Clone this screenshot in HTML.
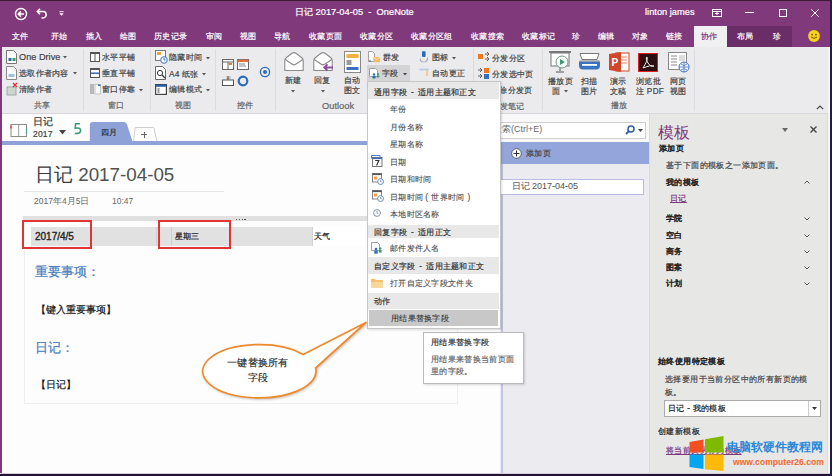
<!DOCTYPE html>
<html><head><meta charset="utf-8">
<style>
html,body{margin:0;padding:0;}
body{text-spacing-trim:space-all;width:832px;height:476px;position:relative;overflow:hidden;background:#fdfdfd;font-family:"Liberation Sans",sans-serif;color:#444;}
.a{position:absolute;}
.t{position:absolute;white-space:nowrap;line-height:1;-webkit-text-stroke-width:0.2px;}
.w{color:#fff;}
.tab{font-size:8.3px;letter-spacing:0.35px;top:32px;color:#fff;}
.rb{font-size:8.2px;letter-spacing:0.3px;color:#444;}
.gl{font-size:8.2px;letter-spacing:0.3px;color:#666;}
.mi{font-size:8.3px;letter-spacing:0.3px;color:#4a4a4a;-webkit-text-stroke-width:0.1px;}
.mh{font-size:8.3px;letter-spacing:0.25px;color:#333;}
.sep{position:absolute;width:1px;background:#dcdcdc;}
svg{position:absolute;overflow:visible;}
</style></head>
<body>
<!-- title bar + tabs -->
<div class="a" style="left:0;top:0;width:832px;height:47px;background:#80397b;"></div>
<div class="a" style="left:0;top:0;width:832px;height:1px;background:#3a1a38;"></div>
<!-- left & bottom borders -->
<div class="a" style="left:0;top:47px;width:1.5px;height:429px;background:#80397b;"></div>



<!-- quick access -->
<svg style="left:14px;top:6.5px" width="14" height="14" viewBox="0 0 14 14"><circle cx="7" cy="7" r="5.5" fill="none" stroke="#fff" stroke-width="1.4"/><path d="M10 7H4.4M7 4.3L4.3 7 7 9.7" fill="none" stroke="#fff" stroke-width="1.7"/></svg>
<svg style="left:35px;top:7px" width="14" height="12" viewBox="0 0 14 12"><path d="M2.5 4.5h5.5a3.2 3.2 0 0 1 0 6.4H6.5M5 1.8L2.3 4.5 5 7.2" fill="none" stroke="#fff" stroke-width="1.5"/></svg>
<svg style="left:58.5px;top:10.5px" width="5" height="5" viewBox="0 0 5 5"><path d="M0.5 0.6h4" stroke="#fff" stroke-width="0.9"/><path d="M0.3 2.2h4.4L2.5 4.8z" fill="#fff"/></svg>

<div class="t w" style="left:295px;top:8px;font-size:9.3px;">日记 2017-04-05 &nbsp;- &nbsp;OneNote</div>
<div class="t w" style="left:645px;top:8px;font-size:9.3px;">linton james</div>
<svg style="left:712px;top:9px" width="10" height="8" viewBox="0 0 10 8"><rect x="0.5" y="0.5" width="9" height="7" fill="none" stroke="#fff" stroke-width="1"/><path d="M0.5 2.5h9M3 4.5h4M5 2.5v3.5" stroke="#fff" stroke-width="1"/></svg>
<div class="a" style="left:745px;top:12px;width:9px;height:1px;background:#fff;"></div>
<div class="a" style="left:779px;top:9px;width:6px;height:6px;border:1px solid #fff;"></div>
<svg style="left:811px;top:9px" width="8" height="8" viewBox="0 0 8 8"><path d="M0.3 0.3l7.4 7.4M7.7 0.3l-7.4 7.4" stroke="#fff" stroke-width="1"/></svg>

<!-- tabs -->
<div class="t tab" style="left:12px;">文件</div>
<div class="t tab" style="left:51px;">开始</div>
<div class="t tab" style="left:86px;">插入</div>
<div class="t tab" style="left:120px;">绘图</div>
<div class="t tab" style="left:154px;">历史记录</div>
<div class="t tab" style="left:206px;">审阅</div>
<div class="t tab" style="left:240px;">视图</div>
<div class="t tab" style="left:274px;">导航</div>
<div class="t tab" style="left:309px;">收藏页面</div>
<div class="t tab" style="left:360px;">收藏分区</div>
<div class="t tab" style="left:411px;">收藏分区组</div>
<div class="t tab" style="left:471px;">收藏搜索</div>
<div class="t tab" style="left:522px;">收藏标记</div>
<div class="t tab" style="left:572px;">珍</div>
<div class="t tab" style="left:598px;">编辑</div>
<div class="t tab" style="left:632px;">对象</div>
<div class="t tab" style="left:666px;">链接</div>
<div class="a" style="left:694px;top:26px;width:33px;height:21px;background:#f0f0f2;"></div>
<div class="t tab" style="left:701px;color:#80397b;">协作</div>
<div class="a" style="left:727px;top:26px;width:65px;height:21px;background:#6b2d67;"></div>
<div class="t tab" style="left:737px;">布局</div>
<div class="t tab" style="left:773px;">珍</div>
<svg style="left:808px;top:30px" width="12" height="12" viewBox="0 0 12 12"><circle cx="6" cy="6" r="5.9" fill="#f7d21c"/><circle cx="4.1" cy="4.6" r="0.9" fill="#6b4a00"/><circle cx="7.9" cy="4.6" r="0.9" fill="#6b4a00"/><path d="M3 6.9q3 3 6 0" fill="none" stroke="#6b4a00" stroke-width="1"/></svg>

<!-- ribbon -->
<div class="a" style="left:1.5px;top:47px;width:827px;height:66px;background:#ebebee;"></div>
<div class="a" style="left:2px;top:113px;width:827px;height:1px;background:#d8d8dc;"></div>

<!-- group 共享 -->
<svg style="left:6px;top:50px" width="12" height="14" viewBox="0 0 12 14"><path d="M0.5 0.5h7l3 3v10h-10z" fill="#fff" stroke="#777"/><rect x="2.5" y="8" width="3" height="3" fill="#2b6cb8"/><rect x="6.5" y="8" width="3" height="3" fill="#3a9a5a"/></svg>
<div class="t rb" style="left:19px;top:53px;font-size:9.2px;letter-spacing:0;">One Drive</div>
<svg style="left:62.5px;top:56px" width="4" height="2.5" viewBox="0 0 4 2.5"><path d="M0 0h4L2 2.5z" fill="#555"/></svg>
<svg style="left:6px;top:66px" width="12" height="14" viewBox="0 0 12 14"><path d="M0.5 0.5h7l3 3v10h-10z" fill="#fafafa" stroke="#888"/><rect x="2.5" y="8" width="6" height="3" fill="#9cc3e0"/></svg>
<div class="t rb" style="left:19px;top:70px;">选取作者内容</div>
<svg style="left:72.5px;top:72px" width="4" height="2.5" viewBox="0 0 4 2.5"><path d="M0 0h4L2 2.5z" fill="#555"/></svg>
<svg style="left:6px;top:82px" width="12" height="14" viewBox="0 0 12 14"><rect x="1" y="5" width="9" height="8" fill="#cfd6cf" stroke="#9aa"/><path d="M7 1l4 4M11 1l-4 4" stroke="#e03030" stroke-width="1.3"/></svg>
<div class="t rb" style="left:19px;top:86px;">清除作者</div>
<div class="t gl" style="left:34px;top:102px;">共享</div>
<div class="sep" style="left:83px;top:49px;height:62px;"></div>

<!-- group 窗口 -->
<svg style="left:89.5px;top:52px" width="10" height="10" viewBox="0 0 10 10"><rect x="0.5" y="0.5" width="9" height="9" fill="#fff" stroke="#555" stroke-width="1"/><path d="M5 0.5v9" stroke="#555" stroke-width="1"/><rect x="0.5" y="0.5" width="9" height="1.5" fill="#555"/></svg>
<div class="t rb" style="left:102px;top:54px;">水平平铺</div>
<svg style="left:89.5px;top:68px" width="10" height="10" viewBox="0 0 10 10"><rect x="0.5" y="0.5" width="9" height="9" fill="#fff" stroke="#555" stroke-width="1"/><rect x="0.5" y="0.5" width="9" height="1.5" fill="#555"/><path d="M0.5 5.2h9" stroke="#2b5ea8" stroke-width="1.4"/></svg>
<div class="t rb" style="left:102px;top:70px;">垂直平铺</div>
<svg style="left:89.5px;top:84px" width="11" height="10" viewBox="0 0 11 10"><rect x="0" y="0" width="4" height="10" fill="#b8b8b8"/><rect x="5" y="0.5" width="5.5" height="9.5" fill="#fafafa" stroke="#bbb" stroke-width="0.8"/><rect x="8" y="0.5" width="2.5" height="1.5" fill="#3a70c0"/></svg>
<div class="t rb" style="left:102px;top:86px;">窗口停靠</div>
<svg style="left:139px;top:89px" width="4" height="2.5" viewBox="0 0 4 2.5"><path d="M0 0h4L2 2.5z" fill="#555"/></svg>
<div class="t gl" style="left:108px;top:102px;">窗口</div>
<div class="sep" style="left:150px;top:49px;height:62px;"></div>

<!-- group 视图 -->
<svg style="left:155px;top:50px" width="13" height="14" viewBox="0 0 13 14"><rect x="0.5" y="0.5" width="10" height="10" fill="#fff" stroke="#777"/><rect x="2" y="2" width="4" height="3" fill="#f0a040"/><circle cx="9" cy="10" r="3.3" fill="#fff" stroke="#3a6fb8"/><path d="M9 8v2h1.5" stroke="#3a6fb8" fill="none"/></svg>
<div class="t rb" style="left:169px;top:54px;">隐藏时间</div>
<svg style="left:205.5px;top:57px" width="4" height="2.5" viewBox="0 0 4 2.5"><path d="M0 0h4L2 2.5z" fill="#555"/></svg>
<svg style="left:155px;top:66px" width="13" height="14" viewBox="0 0 13 14"><path d="M0.5 0.5h7l3 3v10h-10z" fill="#fff" stroke="#666"/><circle cx="5" cy="7" r="2.6" fill="none" stroke="#333"/><path d="M7 9l3 3" stroke="#333" stroke-width="1.2"/></svg>
<div class="t rb" style="left:169px;top:70px;font-size:8.4px;letter-spacing:0.2px;">A4 纸张</div>
<svg style="left:202px;top:73px" width="4" height="2.5" viewBox="0 0 4 2.5"><path d="M0 0h4L2 2.5z" fill="#555"/></svg>
<svg style="left:155px;top:84px" width="12" height="11" viewBox="0 0 12 11"><rect x="0.6" y="0.6" width="10.8" height="9.8" fill="#fff" stroke="#444" stroke-width="1.2"/><rect x="0.6" y="0.6" width="10.8" height="2.2" fill="#2b5ea8"/><rect x="2.5" y="4" width="2" height="5" fill="#999"/></svg>
<div class="t rb" style="left:169px;top:86px;">编辑模式</div>
<svg style="left:205.5px;top:89px" width="4" height="2.5" viewBox="0 0 4 2.5"><path d="M0 0h4L2 2.5z" fill="#555"/></svg>
<div class="t gl" style="left:175px;top:102px;">视图</div>
<div class="sep" style="left:215px;top:49px;height:62px;"></div>

<!-- group 控件 -->
<svg style="left:222px;top:59px" width="12" height="11" viewBox="0 0 12 11"><rect x="0.5" y="0.5" width="11" height="10" fill="#fff" stroke="#666"/><path d="M0.5 3h11M6 3v7.5" stroke="#666"/><rect x="7" y="4" width="3" height="2" fill="#e08030"/></svg>
<svg style="left:237px;top:59px" width="12" height="11" viewBox="0 0 12 11"><rect x="0.5" y="0.5" width="11" height="10" fill="#fff" stroke="#666"/><rect x="0.5" y="0.5" width="11" height="2.5" fill="#e07040"/><path d="M2 5h6M2 7h7" stroke="#888"/></svg>
<svg style="left:222px;top:75px" width="12" height="11" viewBox="0 0 12 11"><rect x="0.5" y="5" width="11" height="5.5" fill="#fff" stroke="#555"/><path d="M6 1v4" stroke="#555"/><text x="4" y="4" font-size="4" fill="#555">10</text></svg>
<svg style="left:237px;top:75px" width="12" height="12" viewBox="0 0 12 12"><circle cx="6" cy="6" r="4.3" fill="none" stroke="#2b6cb8" stroke-width="2.2"/></svg>
<svg style="left:259px;top:66px" width="12" height="12" viewBox="0 0 12 12"><circle cx="6" cy="6" r="4.6" fill="none" stroke="#2b6cb8" stroke-width="1.4"/><circle cx="6" cy="6" r="2" fill="#2b6cb8"/></svg>
<div class="t gl" style="left:237px;top:102px;">控件</div>
<div class="sep" style="left:275px;top:49px;height:62px;"></div>

<!-- group Outlook -->
<svg style="left:284px;top:52px" width="20" height="20" viewBox="0 0 20 20"><path d="M0.8 8.5Q0.8 6.8 2.5 5.5L8 1.3Q10 0 12 1.3L17.5 5.5Q19.2 6.8 19.2 8.5V18.5H0.8Z" fill="#fff" stroke="#8a8a8a" stroke-width="1.1"/><path d="M1.2 7.5L8.3 12.3Q10 13.4 11.7 12.3L18.8 7.5" fill="none" stroke="#8a8a8a" stroke-width="1.1"/></svg>
<div class="t rb" style="left:285px;top:77px;">新建</div>
<svg style="left:291.3px;top:89.5px" width="4" height="2.5" viewBox="0 0 4 2.5"><path d="M0 0h4L2 2.5z" fill="#555"/></svg>
<svg style="left:313px;top:52px" width="21" height="20" viewBox="0 0 21 20"><path d="M0.8 8.5Q0.8 6.8 2.5 5.5L8 1.3Q10 0 12 1.3L17.5 5.5Q19.2 6.8 19.2 8.5V18.5H0.8Z" fill="#fff" stroke="#8a8a8a" stroke-width="1.1"/><path d="M1.2 7.5L8.3 12.3Q10 13.4 11.7 12.3L18.8 7.5" fill="none" stroke="#8a8a8a" stroke-width="1.1"/><path d="M20 15.5H11.5M14.5 12.3L11.3 15.5l3.2 3.2" fill="none" stroke="#8b4a9e" stroke-width="1.9"/></svg>
<div class="t rb" style="left:314px;top:77px;">回复</div>
<svg style="left:321.3px;top:89.5px" width="4" height="2.5" viewBox="0 0 4 2.5"><path d="M0 0h4L2 2.5z" fill="#555"/></svg>
<svg style="left:344px;top:51px" width="17" height="22" viewBox="0 0 17 22"><rect x="0.5" y="0.5" width="16" height="21" fill="#fff" stroke="#888"/><rect x="2.5" y="3" width="12" height="4" fill="#f5b040"/><rect x="2.5" y="9" width="5" height="5" fill="#999"/><rect x="2.5" y="16" width="12" height="3" fill="#3a70c0"/></svg>
<div class="t rb" style="left:344px;top:77px;">自动</div>
<div class="t rb" style="left:344px;top:87px;">图文</div>
<div class="t gl" style="left:322px;top:102px;font-size:9.3px;letter-spacing:0;">Outlook</div>

<!-- 群发/字段 -->
<svg style="left:368px;top:50.5px" width="13" height="12" viewBox="0 0 13 12"><path d="M0.5 0.5h4l2 2v8h-6z" fill="#fff" stroke="#999" stroke-width="0.9"/><rect x="5.3" y="6" width="6.8" height="5.2" fill="#f5b860"/><path d="M5.3 6l3.4 2.6L12.1 6" fill="none" stroke="#fff" stroke-width="0.6"/><rect x="1" y="9.5" width="2" height="1.2" fill="#3a70c0"/></svg>
<div class="t rb" style="left:383px;top:54px;">群发</div>
<div class="a" style="left:367px;top:65px;width:43px;height:16px;background:#d4d4d6;"></div>
<svg style="left:369px;top:67.5px" width="12" height="11" viewBox="0 0 12 11"><path d="M0.5 0.5h6l2 2v6h-8z" fill="#fff" stroke="#999" stroke-width="0.9"/><circle cx="5" cy="6.5" r="1.2" fill="#2b6cb8"/><rect x="3.5" y="8" width="3" height="2.5" fill="#2b6cb8"/><circle cx="9" cy="6" r="1.1" fill="#3a9a78"/><rect x="7.8" y="7.3" width="2.5" height="2.2" fill="#3a9a78"/></svg>
<div class="t rb" style="left:382px;top:70px;">字段</div>
<svg style="left:402.5px;top:72.5px" width="4" height="2.5" viewBox="0 0 4 2.5"><path d="M0 0h4L2 2.5z" fill="#444"/></svg>

<!-- 图标 etc -->
<svg style="left:419px;top:50.5px" width="10" height="12" viewBox="0 0 10 12"><rect x="3" y="0.3" width="3.6" height="5.6" rx="0.8" fill="#2b6cb8"/><path d="M1.2 7.5q0 3.5 3.5 3.5M8.6 6.5q0 4-3.2 4.5" fill="none" stroke="#a0a8b8" stroke-width="1.1"/></svg>
<div class="t rb" style="left:432px;top:54px;">图标</div>
<svg style="left:452px;top:56.5px" width="4" height="2.5" viewBox="0 0 4 2.5"><path d="M0 0h4L2 2.5z" fill="#555"/></svg>
<svg style="left:419px;top:68px" width="11" height="9" viewBox="0 0 11 9"><path d="M0.5 1.5h9.5" stroke="#b8cce8" stroke-width="1.8" fill="none"/><path d="M8 2.5v5.5" stroke="#f8c080" stroke-width="1.6"/></svg>
<div class="t rb" style="left:432px;top:70px;">自动更正</div>
<div class="sep" style="left:473px;top:49px;height:62px;"></div>
<svg style="left:478px;top:52px" width="12" height="10" viewBox="0 0 12 10"><rect x="0" y="2" width="5" height="5" fill="#f07820"/><path d="M7 2h4M9 0l2 2-2 2M7 7h4M9 5l2 2-2 2" fill="none" stroke="#555" stroke-width="0.9"/></svg>
<div class="t rb" style="left:492px;top:53.5px;font-size:8.4px;">分发分区</div>
<svg style="left:478px;top:68px" width="12" height="11" viewBox="0 0 12 11"><rect x="6" y="0" width="5" height="5" fill="#f07820"/><rect x="6" y="6" width="5" height="5" fill="#3a70c0"/><path d="M0 2h4M2 0l2 2-2 2M0 8h4M2 6l2 2-2 2" fill="none" stroke="#555" stroke-width="0.9"/></svg>
<div class="t rb" style="left:492px;top:69.5px;font-size:8.4px;">分发选中页</div>
<div class="t rb" style="left:491px;top:85.5px;font-size:8.4px;">删除分发页</div>
<div class="t gl" style="left:491.5px;top:101.5px;font-size:8.4px;">分发笔记</div>
<div class="sep" style="left:542px;top:49px;height:62px;"></div>

<!-- 播放 -->
<svg style="left:548px;top:51px" width="24" height="22" viewBox="0 0 24 22"><path d="M1 1h22" stroke="#555" stroke-width="1.5"/><rect x="3" y="2" width="18" height="13" fill="#fff" stroke="#777"/><path d="M12 15v5M8 21h8" stroke="#555"/><circle cx="14" cy="11" r="6" fill="#fff" stroke="#6a9a80"/><path d="M12 8v6l5-3z" fill="#3a9a78"/></svg>
<div class="t rb" style="left:548px;top:78px;">播放页</div>
<div class="t rb" style="left:552px;top:88px;">面</div>
<svg style="left:563.5px;top:90px" width="4" height="2.5" viewBox="0 0 4 2.5"><path d="M0 0h4L2 2.5z" fill="#555"/></svg>
<svg style="left:578px;top:52px" width="23" height="20" viewBox="0 0 23 20"><path d="M2 1.5h19l-2 6H4z" fill="#fff" stroke="#777" stroke-width="1"/><path d="M1 9.5h21v4a4 4 0 0 1-4 4H5a4 4 0 0 1-4-4z" fill="#3a74c0"/><path d="M1.5 9h20" stroke="#888" stroke-width="1"/><rect x="4" y="12" width="15" height="1.8" fill="#fff"/></svg>
<div class="t rb" style="left:581px;top:78px;">扫描</div>
<div class="t rb" style="left:581px;top:88px;">图片</div>
<svg style="left:608px;top:51px" width="22" height="22" viewBox="0 0 22 22"><rect x="8" y="2" width="13" height="18" fill="#fff" stroke="#d04a2a"/><path d="M11 6h8M11 9h8M11 12h8" stroke="#e08060"/><path d="M1 3l12-2v20L1 19z" fill="#d2472a"/><text x="3.5" y="14.5" font-size="10" font-weight="bold" fill="#fff" font-family="Liberation Sans">P</text></svg>
<div class="t rb" style="left:610px;top:78px;">演示</div>
<div class="t rb" style="left:610px;top:88px;">文稿</div>
<div class="t gl" style="left:611px;top:102px;">播放</div>
<svg style="left:638px;top:53px" width="20" height="19" viewBox="0 0 20 19"><rect x="0.5" y="0.5" width="19" height="18" fill="#2a1010" stroke="#e02020"/><path d="M5 15c3-5 5-9 4-11-1 0-1 3 1 6s4 4 6 3c-2-1-6 0-11 2z" fill="none" stroke="#eee" stroke-width="1"/></svg>
<div class="t rb" style="left:636px;top:78px;">浏览批</div>
<div class="t rb" style="left:636px;top:88px;">注 PDF</div>
<svg style="left:668px;top:52px" width="22" height="21" viewBox="0 0 22 21"><rect x="0.5" y="0.5" width="18" height="17" fill="#fff" stroke="#888"/><path d="M3 4h6M3 7h6M3 10h6M3 13h6" stroke="#888"/><rect x="11" y="3" width="6" height="6" fill="#ddd"/><circle cx="16" cy="15" r="5" fill="#fff" stroke="#3a70c0"/><path d="M11 15h10M16 10v10M13 12q3 3 6 0M13 18q3-3 6 0" fill="none" stroke="#3a70c0" stroke-width="0.8"/></svg>
<div class="t rb" style="left:670px;top:78px;">网页</div>
<div class="t rb" style="left:670px;top:88px;">视图</div>
<div class="sep" style="left:694px;top:49px;height:62px;"></div>
<svg style="left:816px;top:105px" width="8" height="5" viewBox="0 0 8 5"><path d="M0.8 4.2L4 1l3.2 3.2" fill="none" stroke="#444" stroke-width="1.2"/></svg>

<!-- notebook bar -->
<div class="a" style="left:2px;top:114px;width:498px;height:27px;background:#fdfdfd;"></div>
<svg style="left:0;top:110px" width="90" height="35" viewBox="0 110 90 35"><rect x="11" y="124.5" width="15.5" height="12" fill="#fff" stroke="#8a8a8a" stroke-width="1"/><path d="M18.7 124.5v12" stroke="#9a9a9a" stroke-width="1"/><path d="M11 125.5v3" stroke="#e03030" stroke-width="1.3"/><path d="M26.5 128.5v2M26.5 131.5v2" stroke="#30a090" stroke-width="1.3"/><path d="M80 123.8H75.6L75.2 128.2Q80.6 127.2 80.6 130.6Q80.6 134 74.8 133.4" fill="none" stroke="#3a9a78" stroke-width="1.6"/></svg>
<div class="t" style="left:33px;top:116.5px;font-size:10.2px;color:#333;">日记</div>
<div class="t" style="left:33px;top:130px;font-size:8.6px;color:#444;letter-spacing:0.1px;">2017</div>
<svg style="left:59px;top:130px" width="7" height="4.5"><path d="M0 0h7L3.5 4.5z" fill="#444"/></svg>

<svg style="left:0;top:0" width="170" height="150" viewBox="0 0 170 150"><path d="M133.6 141 L135.2 127.5 H153.8 L156.8 141" fill="#fff" stroke="#cfcfcf" stroke-width="1"/><path d="M89.8 141.5 V125 Q89.8 122 93 122 H123.5 Q126.5 122 127.2 125 L132.5 141.5 Z" fill="#8ea2d8"/></svg>
<div class="t" style="left:101px;top:127.5px;font-size:8.3px;color:#333;-webkit-text-stroke-width:0.2px;">四月</div>
<div class="a" style="left:141px;top:134px;width:6px;height:1px;background:#666;"></div><div class="a" style="left:143.5px;top:131.5px;width:1px;height:6px;background:#666;"></div>
<div class="a" style="left:2px;top:141px;width:498px;height:3.5px;background:#8ea2d8;"></div>

<!-- page -->
<div class="t" style="left:35px;top:166px;font-size:18.8px;color:#3a3a3a;-webkit-text-stroke-width:0;"><span style="font-weight:300">日记</span> <span style="color:#505050">2017-04-05</span></div>
<div class="a" style="left:24px;top:191px;width:200px;height:1px;background:#e6e6e6;"></div>
<div class="t" style="left:34px;top:197px;font-size:8.5px;color:#666;-webkit-text-stroke-width:0;">2017年4月5日</div>
<div class="t" style="left:112px;top:197px;font-size:8.5px;color:#666;-webkit-text-stroke-width:0;">10:47</div>

<!-- table -->
<div class="a" style="left:23px;top:216px;width:344px;height:5px;background:#e0e0e0;"></div>
<div class="a" style="left:236px;top:219px;width:1.2px;height:1.2px;background:#555;"></div><div class="a" style="left:238.8px;top:219px;width:1.2px;height:1.2px;background:#555;"></div><div class="a" style="left:241.6px;top:219px;width:1.2px;height:1.2px;background:#555;"></div><div class="a" style="left:244.4px;top:219px;width:1.2px;height:1.2px;background:#555;"></div>
<div class="a" style="left:31px;top:227px;width:281px;height:19px;background:#e1e1e1;"></div>
<div class="a" style="left:156px;top:227px;width:1px;height:19px;background:#cfcfcf;"></div>
<div class="a" style="left:171px;top:227px;width:1px;height:19px;background:#cfcfcf;"></div>
<div class="a" style="left:312px;top:227px;width:55px;height:19px;background:#fff;"></div>
<div class="t" style="left:35px;top:232px;font-size:10px;color:#222;-webkit-text-stroke-width:0.35px;">2017/4/5</div>
<div class="t" style="left:175px;top:233px;font-size:7.6px;color:#222;">星期三</div>
<div class="t" style="left:314px;top:233px;font-size:7.6px;color:#222;">天气</div><div class="a" style="left:312px;top:227px;width:1px;height:19px;background:#d4d4d4;"></div>
<div class="a" style="left:22px;top:220px;width:70px;height:29px;border:2px solid #e03434;box-sizing:border-box;"></div>
<div class="a" style="left:158px;top:220px;width:73px;height:29px;border:2px solid #e03434;box-sizing:border-box;"></div>

<div class="a" style="left:24px;top:250px;width:432px;height:153px;border-left:1px solid #eee;border-bottom:1px solid #eee;border-right:1px solid #eee;"></div>
<div class="t" style="left:35px;top:265px;font-size:13px;color:#4a7ebf;">重要事项：</div>
<div class="t" style="left:36px;top:305px;font-size:9.6px;color:#111;">【键入重要事项】</div>
<div class="t" style="left:35px;top:341px;font-size:13px;color:#4a7ebf;">日记：</div>
<div class="t" style="left:36px;top:380px;font-size:9.6px;color:#111;">【日记】</div>

<!-- page list -->
<div class="a" style="left:500px;top:114px;width:149px;height:358.5px;background:#ebebf0;"></div>
<div class="a" style="left:501px;top:114px;width:1.5px;height:358.5px;background:#c4c4e4;"></div><div class="a" style="left:500px;top:114px;width:149px;height:28px;background:#f9f9fa;"></div>
<div class="a" style="left:500px;top:122px;width:145.5px;height:16.5px;background:#fff;border:1px solid #cfcfcf;box-sizing:border-box;"></div>
<div class="t" style="left:493px;top:125px;font-size:9px;color:#6a6a6a;-webkit-text-stroke-width:0;">搜索(Ctrl+E)</div>
<svg style="left:625px;top:125px" width="10" height="10" viewBox="0 0 10 10"><circle cx="6" cy="4" r="3" fill="none" stroke="#2b5ea8" stroke-width="1.5"/><path d="M4 6L1 9" stroke="#2b5ea8" stroke-width="1.8"/></svg>
<svg style="left:638px;top:129px" width="5" height="3"><path d="M0 0h5L2.5 3z" fill="#444"/></svg>
<div class="a" style="left:501px;top:142px;width:147.5px;height:22px;background:#93a5da;"></div>
<svg style="left:511px;top:148px" width="11" height="11" viewBox="0 0 11 11"><circle cx="5.5" cy="5.5" r="4.8" fill="#fff" stroke="#555" stroke-width="0.9"/><path d="M5.5 2.5v6M2.5 5.5h6" stroke="#333" stroke-width="1.1"/></svg>
<div class="t" style="left:526px;top:149px;font-size:8.3px;letter-spacing:0.4px;color:#444;">添加页</div>
<div class="a" style="left:500px;top:179px;width:144px;height:16px;background:#fff;border:1px solid #b8bce0;box-sizing:border-box;"></div>
<div class="t" style="left:511.5px;top:182px;font-size:9px;color:#555;-webkit-text-stroke-width:0.05px;">日记 2017-04-05</div>

<!-- templates panel -->
<div class="a" style="left:649px;top:114px;width:180px;height:358.5px;background:#e7e7e6;"></div>
<div class="a" style="left:649px;top:114px;width:1px;height:358.5px;background:#dadada;"></div>
<div class="a" style="left:826.5px;top:114px;width:1.5px;height:358.5px;background:#dcdcdc;"></div><div class="a" style="left:828px;top:47px;width:2px;height:427px;background:#f6f6f6;"></div>
<div class="t" style="left:658px;top:125px;font-size:15.5px;color:#80397b;-webkit-text-stroke-width:0;">模板</div>
<svg style="left:782px;top:128px" width="6" height="4"><path d="M0 0h6L3 4z" fill="#666"/></svg>
<svg style="left:810px;top:126.2px" width="7" height="7" viewBox="0 0 7 7"><path d="M0.5 0.5l6 6M6.5 0.5l-6 6" stroke="#444" stroke-width="1.4"/></svg>
<div class="t" style="left:659px;top:144px;font-size:8.3px;letter-spacing:0.4px;color:#222;-webkit-text-stroke-width:0.45px;">添加页</div>
<div class="t" style="left:666px;top:161px;font-size:8.3px;letter-spacing:0.4px;color:#444;">基于下面的模板之一添加页面。</div>
<div class="t" style="left:666px;top:178px;font-size:8.3px;letter-spacing:0.4px;color:#222;-webkit-text-stroke-width:0.45px;">我的模板</div>
<svg style="left:804px;top:180px" width="6" height="4" viewBox="0 0 6 4"><path d="M0.5 3.5L3 1l2.5 2.5" fill="none" stroke="#555" stroke-width="1"/></svg>
<div class="t" style="left:670px;top:194px;font-size:8.3px;letter-spacing:0.4px;color:#80397b;text-decoration:underline;">日记</div>
<div class="t" style="left:666px;top:214px;font-size:8.3px;letter-spacing:0.4px;color:#222;-webkit-text-stroke-width:0.45px;">学院</div>
<div class="t" style="left:666px;top:231px;font-size:8.3px;letter-spacing:0.4px;color:#222;-webkit-text-stroke-width:0.45px;">空白</div>
<div class="t" style="left:666px;top:247px;font-size:8.3px;letter-spacing:0.4px;color:#222;-webkit-text-stroke-width:0.45px;">商务</div>
<div class="t" style="left:666px;top:263px;font-size:8.3px;letter-spacing:0.4px;color:#222;-webkit-text-stroke-width:0.45px;">图案</div>
<div class="t" style="left:666px;top:279px;font-size:8.3px;letter-spacing:0.4px;color:#222;-webkit-text-stroke-width:0.45px;">计划</div>
<svg style="left:804px;top:217px" width="6" height="4" viewBox="0 0 6 4"><path d="M0.5 0.5L3 3l2.5-2.5" fill="none" stroke="#555" stroke-width="1"/></svg>
<svg style="left:804px;top:234px" width="6" height="4" viewBox="0 0 6 4"><path d="M0.5 0.5L3 3l2.5-2.5" fill="none" stroke="#555" stroke-width="1"/></svg>
<svg style="left:804px;top:250px" width="6" height="4" viewBox="0 0 6 4"><path d="M0.5 0.5L3 3l2.5-2.5" fill="none" stroke="#555" stroke-width="1"/></svg>
<svg style="left:804px;top:266px" width="6" height="4" viewBox="0 0 6 4"><path d="M0.5 0.5L3 3l2.5-2.5" fill="none" stroke="#555" stroke-width="1"/></svg>
<svg style="left:804px;top:282px" width="6" height="4" viewBox="0 0 6 4"><path d="M0.5 0.5L3 3l2.5-2.5" fill="none" stroke="#555" stroke-width="1"/></svg>
<div class="t" style="left:658px;top:357px;font-size:8.3px;letter-spacing:0.4px;color:#222;-webkit-text-stroke-width:0.45px;">始终使用特定模板</div>
<div class="t" style="left:665px;top:375px;font-size:8.3px;letter-spacing:0.4px;color:#444;">选择要用于当前分区中的所有新页的模</div>
<div class="t" style="left:665px;top:388px;font-size:8.3px;letter-spacing:0.4px;color:#444;">板。</div>
<div class="a" style="left:664px;top:400px;width:157px;height:17px;background:#fff;border:1px solid #aaa;box-sizing:border-box;"></div>
<div class="a" style="left:808px;top:401px;width:1px;height:15px;background:#ccc;"></div>
<svg style="left:812px;top:407px" width="5" height="3"><path d="M0 0h5L2.5 3z" fill="#333"/></svg>
<div class="t" style="left:668px;top:404px;font-size:8.3px;letter-spacing:0.3px;color:#222;">日记 - 我的模板</div>
<div class="t" style="left:658px;top:427px;font-size:8.3px;letter-spacing:0.4px;color:#222;-webkit-text-stroke-width:0.2px;">创建新模板</div>
<div class="t" style="left:666px;top:445.5px;font-size:8.3px;letter-spacing:0.4px;color:#80397b;text-decoration:underline;">将当前页另存为模板</div>
<!-- watermark -->
<svg style="left:0;top:0" width="832" height="476" viewBox="0 0 832 476"><path d="M689.5 442L703.5 439.5V452.6H689.5Z" fill="#f25022"/><path d="M705 439.2L723.5 436V452.6H705Z" fill="#7fba00"/><path d="M689.5 454.4H703.5V469L689.5 467Z" fill="#05a6f0"/><path d="M705 454.4H723.5V471L705 469.2Z" fill="#ffba08"/></svg>
<div class="t" style="left:727px;top:441px;font-size:12.2px;color:#2a88d8;font-weight:bold;-webkit-text-stroke-width:0;">电脑软硬件教程网</div>
<div class="t" style="left:733px;top:457.5px;font-size:8.6px;color:#f06a2a;font-weight:bold;-webkit-text-stroke-width:0;">www.computer26.com</div>

<!-- dropdown menu -->
<div class="a" style="left:367px;top:81px;width:134px;height:248px;background:#fff;border:1px solid #c6c6c6;box-sizing:border-box;box-shadow:1px 1px 2px rgba(0,0,0,0.15);"></div>
<div class="a" style="left:368px;top:82px;width:131px;height:17px;background:#e8e8e8;"></div>
<div class="t mh" style="left:374px;top:88px;">通用字段 <span style="padding:0 1.5px">-</span> 适用主题和正文</div>
<div class="t mi" style="left:390px;top:105px;">年份</div>
<div class="t mi" style="left:390px;top:123px;">月份名称</div>
<div class="t mi" style="left:390px;top:140px;">星期名称</div>
<svg style="left:371px;top:155px" width="12" height="12" viewBox="0 0 12 12"><path d="M0.5 3.5V0.5h8.5v1.5" fill="none" stroke="#3a70c0" stroke-width="0.9"/><rect x="1.5" y="2.5" width="9.5" height="9" fill="#fff" stroke="#666" stroke-width="0.9"/><rect x="1.5" y="2.5" width="9.5" height="1.6" fill="#3a70c0"/><path d="M4.2 5.5h3.6L5.6 10.5" fill="none" stroke="#333" stroke-width="1.2"/></svg>
<div class="t mi" style="left:390px;top:158px;">日期</div>
<svg style="left:371.5px;top:172.5px" width="12" height="12" viewBox="0 0 12 12"><rect x="0.5" y="0.5" width="9" height="8.5" fill="#fff" stroke="#777" stroke-width="0.9"/><rect x="0.5" y="0.5" width="9" height="1.6" fill="#555"/><rect x="2" y="3.5" width="3" height="3" fill="#f0a040"/><circle cx="8.6" cy="8.6" r="2.9" fill="#fff" stroke="#5a80c0" stroke-width="0.9"/><path d="M8.6 7v1.8h1.2" fill="none" stroke="#5a80c0" stroke-width="0.7"/></svg>
<div class="t mi" style="left:390px;top:175px;">日期和时间</div>
<svg style="left:371.5px;top:190px" width="12" height="12" viewBox="0 0 12 12"><rect x="0.5" y="0.5" width="9" height="8.5" fill="#fff" stroke="#777" stroke-width="0.9"/><rect x="0.5" y="0.5" width="9" height="1.6" fill="#555"/><rect x="2" y="3.5" width="3" height="3" fill="#f0a040"/><circle cx="8.6" cy="8.6" r="2.9" fill="#fff" stroke="#5a80c0" stroke-width="0.9"/><path d="M8.6 7v1.8h1.2" fill="none" stroke="#5a80c0" stroke-width="0.7"/></svg>
<div class="t mi" style="left:390px;top:192.5px;">日期时间<span style="padding:0 3px 0 2px">(</span>世界时间<span style="padding:0 2px 0 3px">)</span></div>
<svg style="left:373px;top:208.5px" width="8" height="8" viewBox="0 0 8 8"><circle cx="4" cy="4" r="3.4" fill="#fff" stroke="#7a8aa0" stroke-width="0.9"/><path d="M4 2v2.2h1.6" fill="none" stroke="#7a8aa0" stroke-width="0.8"/></svg>
<div class="t mi" style="left:390px;top:210px;">本地时区名称</div>
<div class="a" style="left:368px;top:225px;width:131px;height:13px;background:#e8e8e8;"></div>
<div class="t mh" style="left:374px;top:228px;">回复字段 <span style="padding:0 1.5px">-</span> 适用正文</div>
<svg style="left:371px;top:242px" width="12" height="12" viewBox="0 0 12 12"><path d="M0.5 0.5h6l2 2v6h-8z" fill="#fff" stroke="#999" stroke-width="0.9"/><circle cx="5" cy="7" r="1.3" fill="#2b6cb8"/><rect x="3.3" y="8.6" width="3.4" height="3" fill="#2b6cb8"/><circle cx="9.2" cy="6.5" r="1.2" fill="#3a9a78"/><rect x="7.8" y="8" width="2.8" height="2.6" fill="#3a9a78"/></svg>
<div class="t mi" style="left:390px;top:244px;">邮件发件人名</div>
<div class="a" style="left:368px;top:257px;width:131px;height:17px;background:#e8e8e8;"></div>
<div class="t mh" style="left:374px;top:262px;">自定义字段 <span style="padding:0 1.5px">-</span> 适用主题和正文</div>
<svg style="left:371px;top:278px" width="12" height="10" viewBox="0 0 12 10"><path d="M0 1h4l1 1h7v8H0z" fill="#f5c070"/><path d="M0 4h12v6H0z" fill="#f8d89a"/></svg>
<div class="t mi" style="left:390px;top:279px;">打开自定义字段文件夹</div>
<div class="a" style="left:368px;top:293px;width:131px;height:16px;background:#e8e8e8;"></div>
<div class="t mh" style="left:374px;top:297px;">动作</div>
<div class="a" style="left:369px;top:310px;width:129px;height:16px;background:#c8c8c8;"></div>
<div class="t mi" style="left:391px;top:314px;color:#333;">用结果替换字段</div>

<!-- tooltip -->
<div class="a" style="left:422.5px;top:331.5px;width:101.5px;height:52.5px;background:#fff;border:1px solid #bbb;box-sizing:border-box;box-shadow:1px 1px 2px rgba(0,0,0,0.15);"></div>
<div class="t" style="left:431px;top:338px;font-size:8.3px;letter-spacing:0.35px;color:#333;">用结果替换字段</div>
<div class="t" style="left:431px;top:355px;font-size:8.3px;letter-spacing:0.35px;color:#666;">用结果来替换当前页面</div>
<div class="t" style="left:431px;top:367px;font-size:8.3px;letter-spacing:0.35px;color:#666;">里的字段。</div>

<!-- callout -->
<svg style="left:0;top:0" width="832" height="476" viewBox="0 0 832 476"><path d="M366 322.5 L303.2 354.4 A56.7 26.6 0 1 0 315.6 368 Z" fill="#fff" stroke="#ee8a2a" stroke-width="1.7" stroke-linejoin="round" style="filter:drop-shadow(1px 1.5px 1px rgba(0,0,0,0.22))"/></svg>
<div class="t" style="left:227px;top:358px;font-size:10.4px;letter-spacing:0.3px;color:#222;-webkit-text-stroke-width:0.15px;">一键替换所有</div>
<div class="t" style="left:248px;top:372.5px;font-size:10.4px;color:#222;-webkit-text-stroke-width:0.1px;">字段</div>
<div class="a" style="left:0;top:473px;width:832px;height:1px;background:#d8cce0;"></div><div class="a" style="left:0;top:474px;width:832px;height:2px;background:#24122e;"></div>
<div class="a" style="left:830px;top:0;width:2px;height:476px;background:#231c48;"></div>
</body></html>
